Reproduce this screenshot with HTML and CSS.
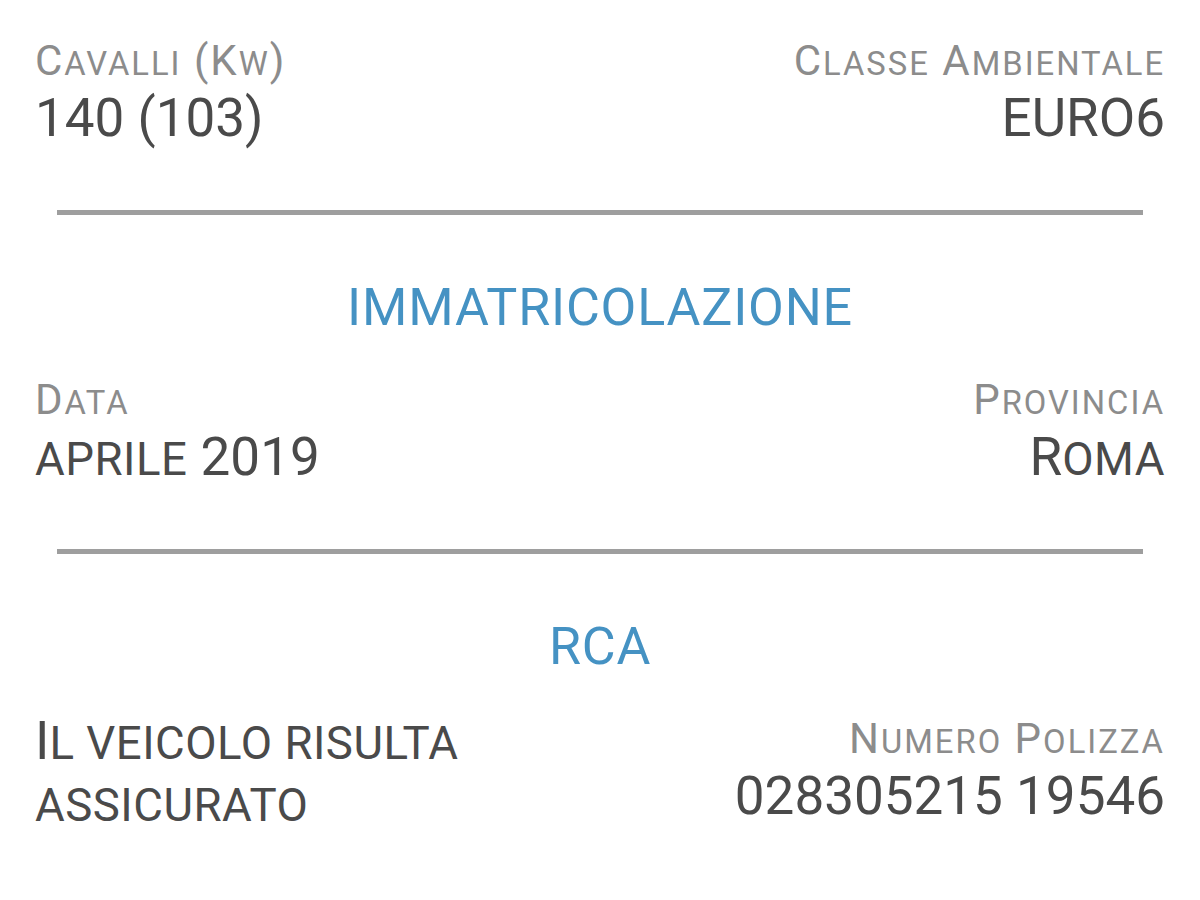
FILE: index.html
```html
<!DOCTYPE html>
<html lang="it">
<head>
<meta charset="utf-8">
<title>Dati veicolo</title>
<link rel="stylesheet" href="styles.css">
</head>
<body>
<main class="page">
  <section class="row">
    <div class="field">
      <div class="label">C<span class="sm">avalli</span> (K<span class="sm">w</span>)</div>
      <div class="value">140 (103)</div>
    </div>
    <div class="field right">
      <div class="label">C<span class="sm">lasse</span> A<span class="sm">mbientale</span></div>
      <div class="value">EURO6</div>
    </div>
  </section>

  <hr class="divider">
  <h2 class="heading">IMMATRICOLAZIONE</h2>

  <section class="row">
    <div class="field">
      <div class="label">D<span class="sm">ata</span></div>
      <div class="value"><span class="sm">aprile</span> 2019</div>
    </div>
    <div class="field right">
      <div class="label">P<span class="sm">rovincia</span></div>
      <div class="value">R<span class="sm">oma</span></div>
    </div>
  </section>

  <hr class="divider">
  <h2 class="heading">RCA</h2>

  <section class="row">
    <div class="field">
      <div class="value multi">I<span class="sm">l veicolo risulta assicurato</span></div>
    </div>
    <div class="field right">
      <div class="label">N<span class="sm">umero</span> P<span class="sm">olizza</span></div>
      <div class="value">028305215 19546</div>
    </div>
  </section>

  <section class="row next">
    <div class="field">
      <div class="label">C<span class="sm">ompagnia</span></div>
    </div>
    <div class="field right">
      <div class="label">S<span class="sm">cadenza</span></div>
    </div>
  </section>
</main>
</body>
</html>
```

FILE: styles.css
```css
html, body {
  margin: 0;
  padding: 0;
  background: #ffffff;
}

body {
  font-family: Roboto, "Liberation Sans", sans-serif;
  overflow: hidden;
  height: 900px;
}

.page {
  padding: 37px 35px 0;
}

.row {
  display: flex;
  justify-content: space-between;
  align-items: flex-start;
}

.field {
  display: flex;
  flex-direction: column;
  gap: 3px;
}

.field.right {
  align-items: flex-end;
  text-align: right;
}

.label {
  font-size: 42px;
  line-height: 48px;
  letter-spacing: 2px;
  color: #8c8c8c;
  white-space: nowrap;
}

.value {
  font-size: 53px;
  line-height: 60px;
  color: #4a4a4a;
  white-space: nowrap;
}

.value.multi {
  white-space: normal;
  max-width: 480px;
  line-height: 62px;
  margin-top: -5px;
}

.sm {
  font-size: 0.78em;
  line-height: 1;
  text-transform: uppercase;
}

.value .sm {
  font-size: 0.86em;
  letter-spacing: 0.5px;
}

.divider {
  border: 0;
  height: 5px;
  background: #9e9e9e;
  margin: 62px 22px 63px;
}

.heading {
  margin: 0 0 38px;
  font-size: 52px;
  line-height: 60px;
  font-weight: 400;
  letter-spacing: 0.8px;
  color: #4592c3;
  text-align: center;
}

.row.next {
  margin-top: 58px;
}
```
